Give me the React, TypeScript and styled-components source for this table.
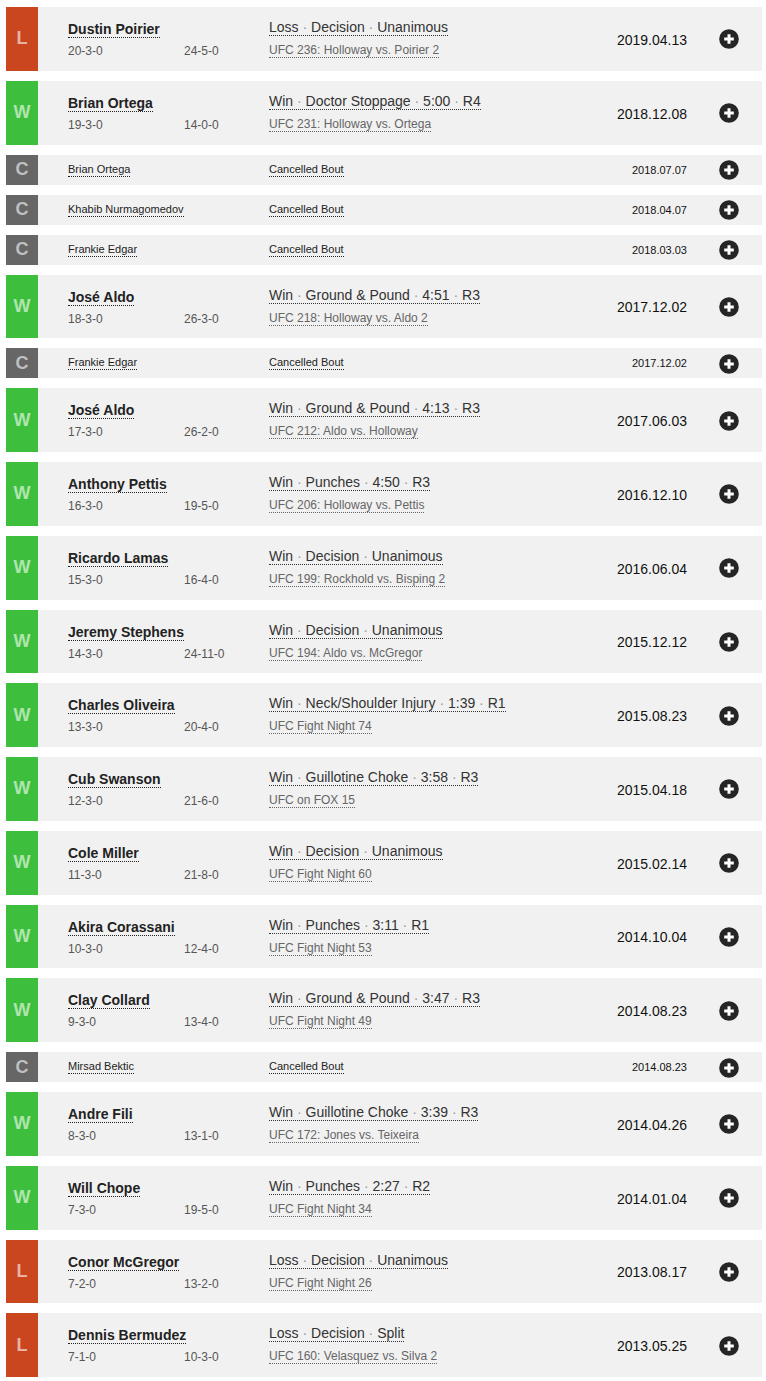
import React from 'react';
import styled, { createGlobalStyle } from 'styled-components';

const GlobalStyle = createGlobalStyle`
  body {
    margin: 0;
    background: #ffffff;
    font-family: "Liberation Sans", Arial, sans-serif;
  }
`;

type Result = 'W' | 'L' | 'C';

interface Fight {
  result: Result;
  opponent: string;
  record?: string;
  oppRecord?: string;
  method?: string[];
  event?: string;
  date: string;
}

const fights: Fight[] = [
  { result: 'L', opponent: 'Dustin Poirier', record: '20-3-0', oppRecord: '24-5-0', method: ['Loss', 'Decision', 'Unanimous'], event: 'UFC 236: Holloway vs. Poirier 2', date: '2019.04.13' },
  { result: 'W', opponent: 'Brian Ortega', record: '19-3-0', oppRecord: '14-0-0', method: ['Win', 'Doctor Stoppage', '5:00', 'R4'], event: 'UFC 231: Holloway vs. Ortega', date: '2018.12.08' },
  { result: 'C', opponent: 'Brian Ortega', date: '2018.07.07' },
  { result: 'C', opponent: 'Khabib Nurmagomedov', date: '2018.04.07' },
  { result: 'C', opponent: 'Frankie Edgar', date: '2018.03.03' },
  { result: 'W', opponent: 'José Aldo', record: '18-3-0', oppRecord: '26-3-0', method: ['Win', 'Ground & Pound', '4:51', 'R3'], event: 'UFC 218: Holloway vs. Aldo 2', date: '2017.12.02' },
  { result: 'C', opponent: 'Frankie Edgar', date: '2017.12.02' },
  { result: 'W', opponent: 'José Aldo', record: '17-3-0', oppRecord: '26-2-0', method: ['Win', 'Ground & Pound', '4:13', 'R3'], event: 'UFC 212: Aldo vs. Holloway', date: '2017.06.03' },
  { result: 'W', opponent: 'Anthony Pettis', record: '16-3-0', oppRecord: '19-5-0', method: ['Win', 'Punches', '4:50', 'R3'], event: 'UFC 206: Holloway vs. Pettis', date: '2016.12.10' },
  { result: 'W', opponent: 'Ricardo Lamas', record: '15-3-0', oppRecord: '16-4-0', method: ['Win', 'Decision', 'Unanimous'], event: 'UFC 199: Rockhold vs. Bisping 2', date: '2016.06.04' },
  { result: 'W', opponent: 'Jeremy Stephens', record: '14-3-0', oppRecord: '24-11-0', method: ['Win', 'Decision', 'Unanimous'], event: 'UFC 194: Aldo vs. McGregor', date: '2015.12.12' },
  { result: 'W', opponent: 'Charles Oliveira', record: '13-3-0', oppRecord: '20-4-0', method: ['Win', 'Neck/Shoulder Injury', '1:39', 'R1'], event: 'UFC Fight Night 74', date: '2015.08.23' },
  { result: 'W', opponent: 'Cub Swanson', record: '12-3-0', oppRecord: '21-6-0', method: ['Win', 'Guillotine Choke', '3:58', 'R3'], event: 'UFC on FOX 15', date: '2015.04.18' },
  { result: 'W', opponent: 'Cole Miller', record: '11-3-0', oppRecord: '21-8-0', method: ['Win', 'Decision', 'Unanimous'], event: 'UFC Fight Night 60', date: '2015.02.14' },
  { result: 'W', opponent: 'Akira Corassani', record: '10-3-0', oppRecord: '12-4-0', method: ['Win', 'Punches', '3:11', 'R1'], event: 'UFC Fight Night 53', date: '2014.10.04' },
  { result: 'W', opponent: 'Clay Collard', record: '9-3-0', oppRecord: '13-4-0', method: ['Win', 'Ground & Pound', '3:47', 'R3'], event: 'UFC Fight Night 49', date: '2014.08.23' },
  { result: 'C', opponent: 'Mirsad Bektic', date: '2014.08.23' },
  { result: 'W', opponent: 'Andre Fili', record: '8-3-0', oppRecord: '13-1-0', method: ['Win', 'Guillotine Choke', '3:39', 'R3'], event: 'UFC 172: Jones vs. Teixeira', date: '2014.04.26' },
  { result: 'W', opponent: 'Will Chope', record: '7-3-0', oppRecord: '19-5-0', method: ['Win', 'Punches', '2:27', 'R2'], event: 'UFC Fight Night 34', date: '2014.01.04' },
  { result: 'L', opponent: 'Conor McGregor', record: '7-2-0', oppRecord: '13-2-0', method: ['Loss', 'Decision', 'Unanimous'], event: 'UFC Fight Night 26', date: '2013.08.17' },
  { result: 'L', opponent: 'Dennis Bermudez', record: '7-1-0', oppRecord: '10-3-0', method: ['Loss', 'Decision', 'Split'], event: 'UFC 160: Velasquez vs. Silva 2', date: '2013.05.25' },
];

const badgeColors: Record<Result, string> = {
  W: '#3dbf3d',
  L: '#c9461f',
  C: '#666666',
};

const List = styled.div`
  display: flex;
  flex-direction: column;
  gap: 10px;
  padding: 7px 4px 0 6px;
`;

const Row = styled.div<{ $compact: boolean }>`
  display: flex;
  align-items: stretch;
  height: ${p => (p.$compact ? '30px' : '63.75px')};
  background: #f1f1f1;
`;

const Badge = styled.div<{ $result: Result }>`
  flex: 0 0 32px;
  display: flex;
  align-items: center;
  justify-content: center;
  background: ${p => badgeColors[p.$result]};
  color: rgba(255, 255, 255, 0.6);
  font-weight: bold;
  font-size: 18px;
`;

const FighterCol = styled.div<{ $compact: boolean }>`
  flex: 0 0 201px;
  margin-left: 30px;
  display: flex;
  flex-direction: column;
  align-items: flex-start;
  justify-content: ${p => (p.$compact ? 'center' : 'flex-start')};
  padding-top: ${p => (p.$compact ? '0' : '14px')};
`;

const Name = styled.span<{ $compact: boolean }>`
  font-size: ${p => (p.$compact ? '11px' : '14px')};
  font-weight: ${p => (p.$compact ? 'normal' : 'bold')};
  line-height: ${p => (p.$compact ? '13px' : '16px')};
  color: #222;
  border-bottom: 1px dotted #222;
`;

const Records = styled.div`
  display: flex;
  margin-top: 6px;
  font-size: 12px;
  line-height: 14px;
  color: #555;
`;

const Record = styled.span`
  width: 116px;
`;

const MethodCol = styled.div<{ $compact: boolean }>`
  flex: 1;
  display: flex;
  flex-direction: column;
  align-items: flex-start;
  justify-content: ${p => (p.$compact ? 'center' : 'flex-start')};
  padding-top: ${p => (p.$compact ? '0' : '12px')};
`;

const Method = styled.span`
  font-size: 14px;
  line-height: 16px;
  color: #333;
  border-bottom: 1px dotted #333;
  white-space: nowrap;
`;

const Dot = styled.span`
  color: #999;
`;

const Event = styled.span`
  margin-top: 7px;
  font-size: 12px;
  line-height: 14px;
  color: #666;
  border-bottom: 1px dotted #666;
`;

const Cancelled = styled.span`
  font-size: 11px;
  line-height: 13px;
  color: #222;
  border-bottom: 1px dotted #222;
`;

const DateCell = styled.div<{ $compact: boolean }>`
  display: flex;
  align-items: center;
  justify-content: flex-end;
  padding-top: ${p => (p.$compact ? '0' : '2px')};
  font-size: ${p => (p.$compact ? '11px' : '14px')};
  color: #111;
`;

const Expand = styled.div`
  flex: 0 0 20px;
  margin: 0 23px 0 32px;
  display: flex;
  align-items: center;
  justify-content: center;
  padding-top: 1px;
`;

const PlusIcon = () => (
  <svg width="20" height="20" viewBox="0 0 20 20">
    <circle cx="10" cy="10" r="9.8" fill="#252525" />
    <path d="M10 5.2v9.6M5.2 10h9.6" stroke="#fff" strokeWidth="3" strokeLinecap="butt" />
  </svg>
);

const FightRow: React.FC<{ fight: Fight }> = ({ fight }) => {
  const compact = fight.result === 'C';
  return (
    <Row $compact={compact}>
      <Badge $result={fight.result}>{fight.result}</Badge>
      <FighterCol $compact={compact}>
        <Name $compact={compact}>{fight.opponent}</Name>
        {!compact && (
          <Records>
            <Record>{fight.record}</Record>
            <span>{fight.oppRecord}</span>
          </Records>
        )}
      </FighterCol>
      <MethodCol $compact={compact}>
        {compact ? (
          <Cancelled>Cancelled Bout</Cancelled>
        ) : (
          <>
            <Method>
              {fight.method!.map((part, i) => (
                <React.Fragment key={i}>
                  {i > 0 && <Dot> · </Dot>}
                  {part}
                </React.Fragment>
              ))}
            </Method>
            <Event>{fight.event}</Event>
          </>
        )}
      </MethodCol>
      <DateCell $compact={compact}>{fight.date}</DateCell>
      <Expand>
        <PlusIcon />
      </Expand>
    </Row>
  );
};

const App: React.FC = () => (
  <>
    <GlobalStyle />
    <List>
      {fights.map((f, i) => (
        <FightRow key={i} fight={f} />
      ))}
    </List>
  </>
);

export default App;
